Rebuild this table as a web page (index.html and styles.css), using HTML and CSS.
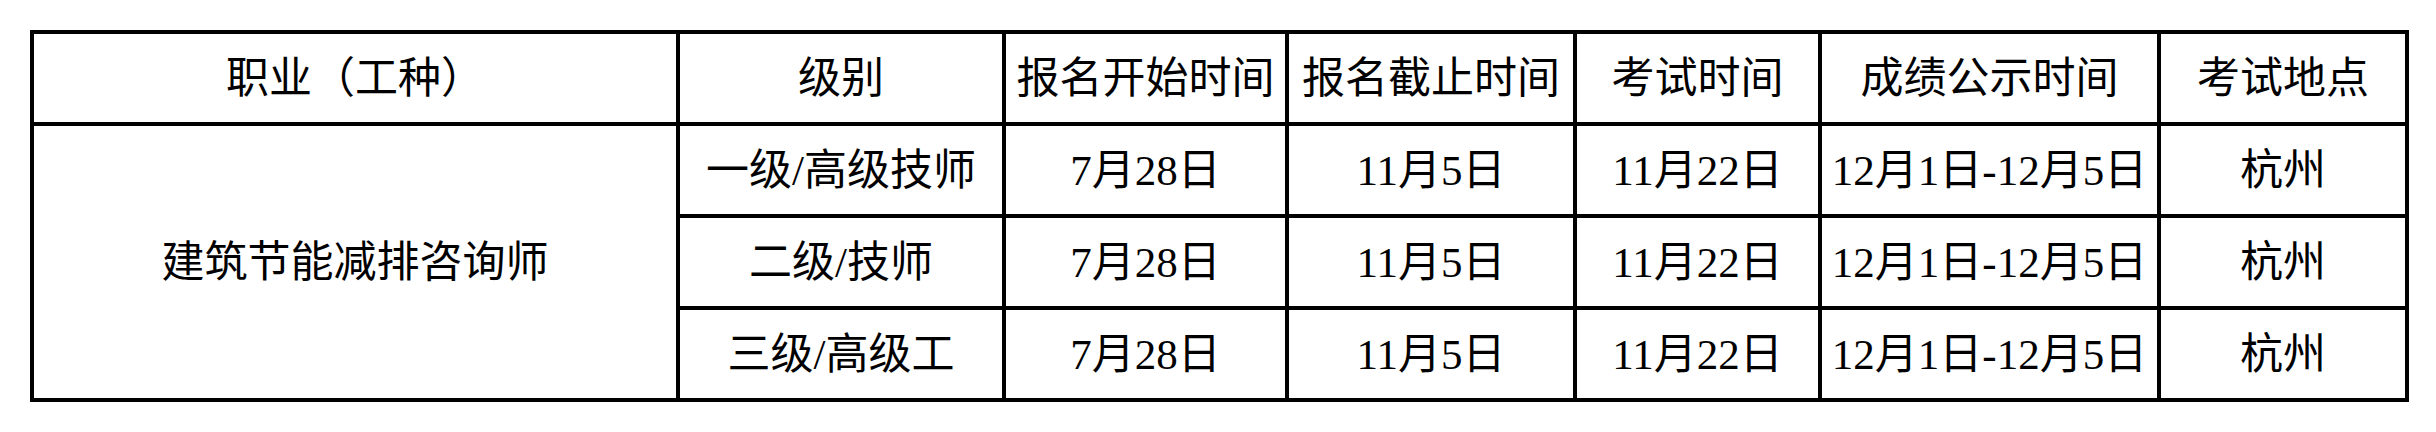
FILE: index.html
```html
<!DOCTYPE html>
<html lang="zh-CN">
<head>
<meta charset="utf-8">
<title>考试安排</title>
<link rel="stylesheet" href="styles.css">
</head>
<body>
<table class="schedule">
  <colgroup>
    <col class="c-job">
    <col class="c-level">
    <col class="c-start">
    <col class="c-end">
    <col class="c-exam">
    <col class="c-result">
    <col class="c-place">
  </colgroup>
  <thead>
    <tr class="head-row">
      <th>职业（工种）</th>
      <th>级别</th>
      <th>报名开始时间</th>
      <th>报名截止时间</th>
      <th>考试时间</th>
      <th>成绩公示时间</th>
      <th>考试地点</th>
    </tr>
  </thead>
  <tbody>
    <tr class="data-row">
      <td rowspan="3">建筑节能减排咨询师</td>
      <td>一级/高级技师</td>
      <td>7月28日</td>
      <td>11月5日</td>
      <td>11月22日</td>
      <td>12月1日-12月5日</td>
      <td>杭州</td>
    </tr>
    <tr class="data-row">
      <td>二级/技师</td>
      <td>7月28日</td>
      <td>11月5日</td>
      <td>11月22日</td>
      <td>12月1日-12月5日</td>
      <td>杭州</td>
    </tr>
    <tr class="data-row">
      <td>三级/高级工</td>
      <td>7月28日</td>
      <td>11月5日</td>
      <td>11月22日</td>
      <td>12月1日-12月5日</td>
      <td>杭州</td>
    </tr>
  </tbody>
</table>
</body>
</html>
```

FILE: styles.css
```css
html, body {
  margin: 0;
  padding: 0;
  background: #ffffff;
}

body {
  padding: 30px 0 0 30px;
  font-family: "Liberation Serif", "Noto Sans CJK SC", serif;
  color: #000000;
}

.schedule {
  border-collapse: collapse;
  table-layout: fixed;
  width: 2375px;
  font-size: 43px;
  line-height: 1;
}

.c-job { width: 646px; }
.c-level { width: 326px; }
.c-start { width: 283px; }
.c-end { width: 288px; }
.c-exam { width: 245px; }
.c-result { width: 339px; }
.c-place { width: 248px; }

.schedule th,
.schedule td {
  border: 4px solid #000000;
  padding: 0;
  text-align: center;
  vertical-align: middle;
  font-weight: 400;
  white-space: nowrap;
  overflow: hidden;
}

.head-row th {
  height: 88px;
}

.data-row td {
  height: 88px;
}
```
